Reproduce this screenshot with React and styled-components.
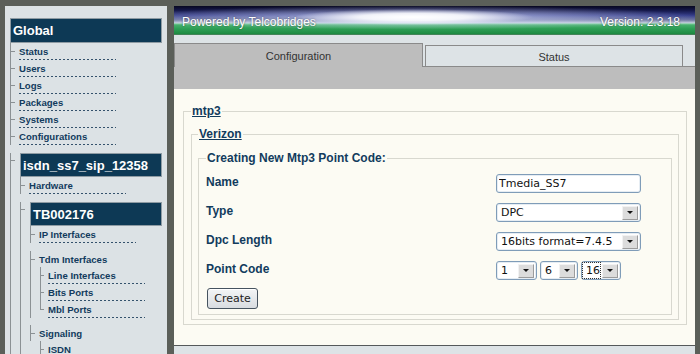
import React from 'react';
import styled, { createGlobalStyle } from 'styled-components';

const LINE = '#8b9194';
const NAVY = '#123b5d';

const GlobalStyle = createGlobalStyle`
  html, body {
    margin: 0;
    padding: 0;
  }
  body {
    background: #5b5f59;
    font-family: "Liberation Sans", Arial, sans-serif;
    overflow: hidden;
  }
`;

const Page = styled.div`
  display: flex;
  gap: 7px;
  height: 354px;
  padding: 6px 5px 0 5px;
  box-sizing: border-box;
  overflow: hidden;
`;

/* ---------- sidebar ---------- */

const Sidebar = styled.nav`
  width: 162px;
  flex: none;
  box-sizing: border-box;
  background: #dce2e5;
  padding: 12px 5px 0 5px;
  overflow: hidden;
`;

const NavBox = styled.div`
  position: relative;
  box-sizing: border-box;
  height: ${p => (p.$nested ? 24 : 25)}px;
  padding-left: 2px;
  margin: ${p => (p.$nested ? '8px 0 0 10px' : '0')};
  border: 1px solid #8e9ba3;
  background: #0d3955;
  color: #fff;
  font-weight: bold;
  font-size: 13px;
  line-height: ${p => (p.$nested ? 23 : 24)}px;
  white-space: nowrap;
  ${p =>
    p.$nested &&
    `
    &::before {
      content: "";
      position: absolute;
      left: -11px;
      top: 6px;
      width: 5px;
      border-top: 1px solid ${LINE};
    }
  `}
`;

const Branch = styled.ul`
  list-style: none;
  margin: 0 0 0 ${p => (p.$root ? 0 : 10)}px;
  padding: 0;
`;

const Node = styled.li`
  position: relative;
  &::before {
    content: "";
    position: absolute;
    left: 0;
    top: 0;
    ${p => (p.$last ? `height: ${p.$tick}px;` : 'bottom: 0;')}
    border-left: 1px solid ${LINE};
  }
`;

const TreeLink = styled.a`
  position: relative;
  display: block;
  width: 97px;
  height: 16px;
  margin: ${p => p.$gap || 0}px 0 0 ${p => p.$inset}px;
  padding-bottom: ${p => (p.$plain ? 0 : 1)}px;
  line-height: 18px;
  font-size: 9.6px;
  font-weight: bold;
  color: ${NAVY};
  text-decoration: none;
  white-space: nowrap;
  background: ${p =>
    p.$plain
      ? 'none'
      : 'repeating-linear-gradient(to right, #34526c 0 2px, transparent 2px 4px) left bottom / 100% 1px no-repeat'};
  &::before {
    content: "";
    position: absolute;
    left: -${p => p.$inset}px;
    top: 8px;
    width: ${p => p.$inset - 4}px;
    border-top: 1px solid ${LINE};
  }
`;

const tree = [
  { label: 'Status' },
  { label: 'Users' },
  { label: 'Logs' },
  { label: 'Packages' },
  { label: 'Systems' },
  { label: 'Configurations' },
  {
    label: 'isdn_ss7_sip_12358',
    box: true,
    children: [
      { label: 'Hardware' },
      {
        label: 'TB002176',
        box: true,
        children: [
          { label: 'IP Interfaces' },
          {
            label: 'Tdm Interfaces',
            gap: 8,
            children: [
              { label: 'Line Interfaces' },
              { label: 'Bits Ports' },
              { label: 'Mbl Ports' },
            ],
          },
          {
            label: 'Signaling',
            gap: 7,
            children: [{ label: 'ISDN' }, { label: 'SS7' }, { label: 'SIP' }],
          },
        ],
      },
    ],
  },
];

function TreeBranch({ items, depth }) {
  return (
    <Branch $root={depth === 0}>
      {items.map((n, i) => {
        const last = i === items.length - 1 && !n.box;
        return (
          <Node key={n.label} $last={last} $tick={(n.gap || 0) + 9}>
            {n.box ? (
              <NavBox $nested>{n.label}</NavBox>
            ) : (
              <TreeLink
                href="#"
                $inset={depth >= 3 ? 8 : 9}
                $gap={n.gap}
                $plain={!!n.children}
              >
                {n.label}
              </TreeLink>
            )}
            {n.children && <TreeBranch items={n.children} depth={depth + 1} />}
          </Node>
        );
      })}
    </Branch>
  );
}

/* ---------- main ---------- */

const Main = styled.main`
  flex: 1;
  min-width: 0;
  display: flex;
  flex-direction: column;
`;

const Header = styled.header`
  height: 29px;
  flex: none;
  box-sizing: border-box;
  display: flex;
  justify-content: space-between;
  align-items: center;
  padding: 3px 15px 0 8px;
  color: #fff;
  font-size: 12px;
  text-shadow: 0 0 2px rgba(0, 0, 20, 0.6);
  background:
    radial-gradient(ellipse 120px 8px at 46% 38%, rgba(255, 255, 255, 1) 0%, rgba(255, 255, 255, 0.85) 45%, rgba(255, 255, 255, 0) 100%),
    radial-gradient(ellipse 290px 12px at 46% 40%, rgba(215, 222, 255, 0.85) 0%, rgba(140, 150, 235, 0) 100%),
    linear-gradient(to bottom, #070720 0%, #15184a 15%, #353d8a 33%, #6c739f 48%, #b8c4d4 57%, #92d2ae 61%, #47b26d 65%, #2e9f56 78%, #1d8a41 96%, #5e7f68 100%);
`;

const Strip = styled.div`
  height: 8px;
  flex: none;
  background: #dde3e6;
`;

const TabBar = styled.div`
  height: 24px;
  flex: none;
  box-sizing: border-box;
  display: flex;
  align-items: flex-end;
  gap: 2px;
  background: #dde3e6;
  border-bottom: 1px solid #8a8a8a;
`;

const Tab = styled.div`
  box-sizing: border-box;
  width: ${p => p.$w}px;
  height: ${p => (p.$active ? 24 : 21)}px;
  margin-bottom: ${p => (p.$active ? -1 : 0)}px;
  border: 1px solid #8a8a8a;
  border-bottom: none;
  background: ${p => (p.$active ? '#bdbdbd' : '#dde3e6')};
  color: #333;
  font-size: 11px;
  display: flex;
  align-items: center;
  justify-content: center;
  padding-top: ${p => (p.$active ? 0 : 2)}px;
`;

const Band = styled.div`
  height: 22px;
  flex: none;
  background: #bdbdbd;
`;

const Content = styled.section`
  height: 257px;
  flex: none;
  box-sizing: border-box;
  background: #fcfbf3;
  padding-top: 15px;
  border-bottom: 1px solid #55595a;
  overflow: hidden;
`;

const Footer = styled.div`
  flex: 1;
  background: #dde3e6;
`;

const Fieldset = styled.fieldset`
  margin: ${p => p.$margin || 0};
  padding: ${p => p.$pad};
  border: 1px solid #d8d8cf;
  min-inline-size: 0;
`;

const Legend = styled.legend`
  padding: 0 1px;
  font-size: 12px;
  line-height: 14px;
  font-weight: bold;
  color: ${NAVY};
`;

const LegendLink = styled.a`
  color: ${NAVY};
  text-decoration: underline;
`;

const Form = styled.div`
  display: grid;
  grid-template-columns: 290px auto;
  grid-auto-rows: 19px;
  row-gap: 10px;
  align-items: center;
`;

const Label = styled.label`
  font-size: 12px;
  font-weight: bold;
  color: ${NAVY};
  padding-bottom: 3px;
`;

const fieldFrame = `
  box-sizing: border-box;
  height: 19px;
  border: 1px solid #7f9cb8;
  border-radius: 3px;
  background: #fff;
  box-shadow: inset 0 0 0 1px #e6edf3;
`;

const TextInput = styled.input`
  ${fieldFrame}
  width: 145px;
  padding: 0 2px;
  font-family: "DejaVu Sans", sans-serif;
  font-size: 11px;
  color: #111;
  outline: none;
`;

const SelectFrame = styled.div`
  ${fieldFrame}
  display: inline-flex;
  align-items: center;
  width: ${p => p.$w}px;
  padding: 0 2px 0 1px;
`;

const Select = styled.select`
  appearance: none;
  flex: 1;
  min-width: 0;
  height: 15px;
  border: none;
  background: transparent;
  padding: 0 0 0 3px;
  margin-right: 2px;
  font-family: "DejaVu Sans", sans-serif;
  font-size: 11px;
  color: #111;
  outline: ${p => (p.$focus ? '1px dotted #333' : 'none')};
`;

const Arrow = styled.span`
  flex: none;
  box-sizing: border-box;
  width: 16px;
  height: 14px;
  background: #dcdcdc;
  border: 1px solid;
  border-color: #f2f2f2 #9c9c9c #9c9c9c #f2f2f2;
  display: flex;
  align-items: center;
  justify-content: center;
  &::after {
    content: "";
    border-left: 3px solid transparent;
    border-right: 3px solid transparent;
    border-top: 3px solid #111;
  }
`;

const CodeGroup = styled.div`
  display: flex;
  gap: 3px;
`;

const Button = styled.button`
  margin: 8px 0 0 1px;
  width: 51px;
  height: 21px;
  padding: 0;
  border: 1px solid #46535f;
  border-radius: 3px;
  background: linear-gradient(to bottom, #f4f5f6, #d8dce0);
  box-shadow: inset 0 1px 0 #fff;
  font-family: "DejaVu Sans", sans-serif;
  font-size: 11px;
  color: #222;
`;

function Dropdown({ width, value, options, focus }) {
  return (
    <SelectFrame $w={width}>
      <Select defaultValue={value} $focus={focus}>
        {options.map(o => (
          <option key={o}>{o}</option>
        ))}
      </Select>
      <Arrow />
    </SelectFrame>
  );
}

export default function App() {
  return (
    <>
      <GlobalStyle />
      <Page>
        <Sidebar>
          <NavBox>Global</NavBox>
          <TreeBranch items={tree} depth={0} />
        </Sidebar>

        <Main>
          <Header>
            <span>Powered by Telcobridges</span>
            <span>Version: 2.3.18</span>
          </Header>
          <Strip />
          <TabBar>
            <Tab $active $w={249}>Configuration</Tab>
            <Tab $w={258}>Status</Tab>
          </TabBar>
          <Band />
          <Content>
            <Fieldset $margin="0 8px 0 9px" $pad="9px 7px 4px 7px">
              <Legend>
                <LegendLink href="#">mtp3</LegendLink>
              </Legend>
              <Fieldset $pad="10px 6px 4px 6px">
                <Legend>
                  <LegendLink href="#">Verizon</LegendLink>
                </Legend>
                <Fieldset $pad="9px 7px 5px 7px">
                  <Legend>Creating New Mtp3 Point Code:</Legend>
                  <Form>
                    <Label>Name</Label>
                    <TextInput defaultValue="Tmedia_SS7" />
                    <Label>Type</Label>
                    <Dropdown width={145} value="DPC" options={['DPC', 'OPC']} />
                    <Label>Dpc Length</Label>
                    <Dropdown
                      width={145}
                      value="16bits format=7.4.5"
                      options={['14bits format=3.8.3', '16bits format=7.4.5', '24bits format=8.8.8']}
                    />
                    <Label>Point Code</Label>
                    <CodeGroup>
                      <Dropdown width={41} value="1" options={['0', '1', '2', '3']} />
                      <Dropdown width={38} value="6" options={['5', '6', '7']} />
                      <Dropdown width={40} value="16" options={['15', '16', '17']} focus />
                    </CodeGroup>
                  </Form>
                  <Button type="button">Create</Button>
                </Fieldset>
              </Fieldset>
            </Fieldset>
          </Content>
          <Footer />
        </Main>
      </Page>
    </>
  );
}
